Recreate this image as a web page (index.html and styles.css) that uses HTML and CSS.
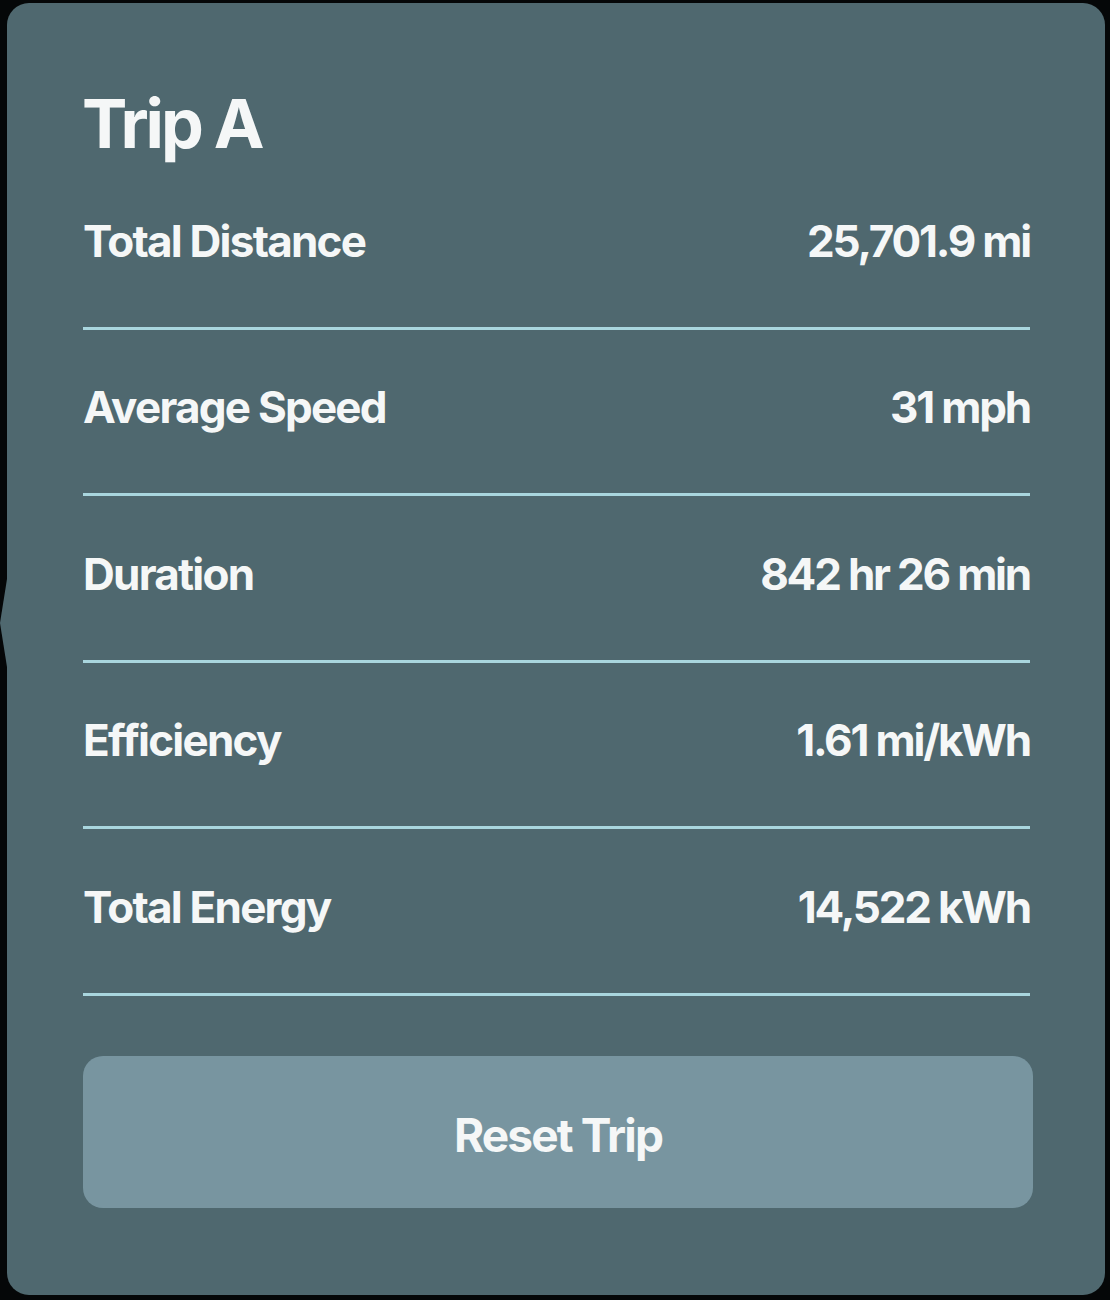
FILE: index.html
```html
<!DOCTYPE html>
<html lang="en">
<head>
    <meta charset="UTF-8">
    <meta name="viewport" content="width=device-width, initial-scale=1.0">
    <title>Trip A</title>
    <link rel="stylesheet" href="styles.css">
</head>
<body>
    <div class="panel">
        <h1 class="title">Trip A</h1>
        <div class="rows">
            <div class="row">
                <span class="label">Total Distance</span>
                <span class="value">25,701.9 mi</span>
            </div>
            <div class="row">
                <span class="label">Average Speed</span>
                <span class="value">31 mph</span>
            </div>
            <div class="row">
                <span class="label">Duration</span>
                <span class="value">842 hr 26 min</span>
            </div>
            <div class="row">
                <span class="label">Efficiency</span>
                <span class="value">1.61 mi/kWh</span>
            </div>
            <div class="row">
                <span class="label">Total Energy</span>
                <span class="value">14,522 kWh</span>
            </div>
        </div>
        <button class="reset" type="button">Reset Trip</button>
    </div>
</body>
</html>
```

FILE: styles.css
```css
body {
    margin: 0;
    background: #050708;
    font-family: Inter, "Noto Sans", sans-serif;
    color: #f5f7f7;
}
.panel {
    position: relative;
    box-sizing: border-box;
    margin: 3px 5px 0 7px;
    height: 1292px;
    padding: 0 75px 0 76px;
    background: #4f686f;
    border-radius: 22px;
}
/* pointer on the left edge */
.panel::before {
    content: "";
    position: absolute;
    left: -7px;
    top: 576px;
    border-style: solid;
    border-width: 44px 7px 44px 0;
    border-color: transparent #4f686f transparent transparent;
}
.title {
    margin: 0 0 0 -1px;
    height: 160px;
    padding-top: 86px;
    box-sizing: border-box;
    font-size: 68px;
    font-weight: 700;
    letter-spacing: -0.045em;
    line-height: 1;
}
.row {
    box-sizing: border-box;
    height: 166.5px;
    padding-bottom: 8px;
    display: flex;
    justify-content: space-between;
    align-items: center;
    border-bottom: 3px solid #a9d6de;
    font-size: 44px;
    font-weight: 700;
    letter-spacing: -0.04em;
}
.value {
    letter-spacing: -0.05em;
}
.reset {
    display: block;
    box-sizing: border-box;
    width: calc(100% + 3px);
    height: 152px;
    margin-top: 60px;
    padding-top: 8px;
    border: none;
    border-radius: 20px;
    background: #7895a0;
    color: #f5f7f7;
    font-family: inherit;
    font-size: 46px;
    font-weight: 700;
    letter-spacing: -0.04em;
}
```
